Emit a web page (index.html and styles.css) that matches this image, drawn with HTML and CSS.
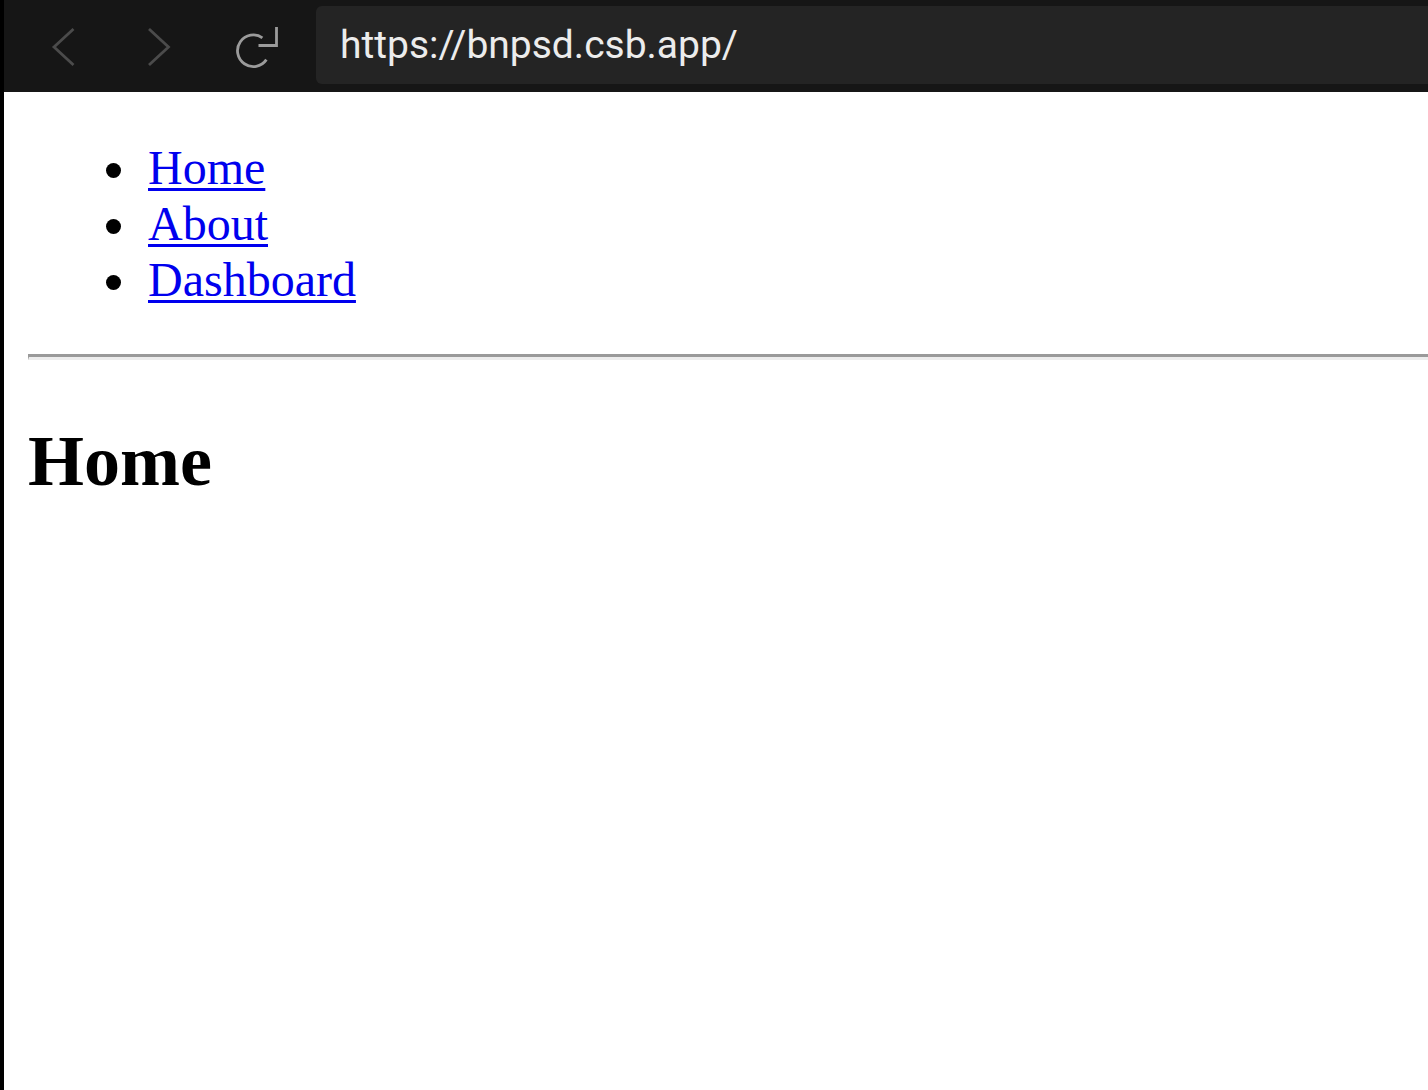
FILE: index.html
```html
<!DOCTYPE html>
<html lang="en">
<head>
<meta charset="utf-8">
<title>bnpsd</title>
<link rel="stylesheet" href="styles.css">
</head>
<body>
<div class="frame">
  <header class="toolbar">
    <svg class="nav-icons" width="312" height="92" viewBox="0 0 312 92" aria-hidden="true">
      <path class="dim" d="M69.5 29 L50 47 L69.5 65"/>
      <path class="dim" d="M145 29 L164.5 47 L145 65"/>
      <path class="lit" d="M258.4 37.8 A15.8 15.8 0 1 0 262.4 59.6"/>
      <path class="lit" d="M254.5 45.5 H272.5 V27"/>
    </svg>
    <div class="address">https://bnpsd.csb.app/</div>
  </header>
  <main class="page">
    <ul class="menu">
      <li><a href="#">Home</a></li>
      <li><a href="#">About</a></li>
      <li><a href="#">Dashboard</a></li>
    </ul>
    <hr class="rule">
    <h1 class="title">Home</h1>
  </main>
</div>
</body>
</html>
```

FILE: styles.css
```css
html, body {
  margin: 0;
  padding: 0;
  background: #ffffff;
}

body {
  width: 1428px;
  height: 1090px;
  overflow: hidden;
}

.frame {
  display: flex;
  flex-direction: column;
  height: 1090px;
  border-left: 4px solid #000000;
  box-sizing: border-box;
}

.toolbar {
  display: flex;
  align-items: flex-start;
  height: 92px;
  flex: 0 0 92px;
  background: #161616;
}

.nav-icons {
  flex: 0 0 312px;
  display: block;
}

.nav-icons path {
  fill: none;
  stroke-width: 2.8;
  stroke-linecap: butt;
  stroke-linejoin: miter;
}

.nav-icons .dim {
  stroke: #4b4b4b;
}

.nav-icons .lit {
  stroke: #9b9b9b;
}

.address {
  flex: 1;
  display: flex;
  align-items: center;
  height: 78px;
  margin-top: 6px;
  background: #242424;
  border-radius: 6px 0 0 6px;
  padding: 0 0 0 24px;
  color: #ececec;
  font-family: Roboto, "Noto Sans", sans-serif;
  font-size: 39px;
  line-height: 1;
  box-sizing: border-box;
}

.page {
  flex: 1;
  padding: 0 0 0 24px;
  font-family: "Liberation Serif", "Times New Roman", serif;
  color: #000000;
  overflow: hidden;
}

.menu {
  margin: 48px 0 0 0;
  padding-left: 120px;
  list-style: none;
  font-size: 48px;
  line-height: 56px;
}

.menu li {
  display: flex;
  align-items: flex-start;
}

.menu li::before {
  content: "";
  flex: 0 0 15px;
  width: 15px;
  height: 15px;
  margin: 23px 27px 0 -42px;
  border-radius: 50%;
  background: #000000;
}

.menu a {
  color: #0000ee;
  text-decoration: underline;
  text-decoration-thickness: 3px;
  text-underline-offset: 4px;
}

.rule {
  margin: 46px 0 0 0;
  height: 0;
  border: none;
  border-top: 3px solid #9a9a9a;
  border-bottom: 3px solid #ededed;
  border-left: 1px solid #9a9a9a;
}

.title {
  margin: 60px 0 0 0;
  font-size: 72px;
  line-height: 83px;
  font-weight: bold;
}
```
